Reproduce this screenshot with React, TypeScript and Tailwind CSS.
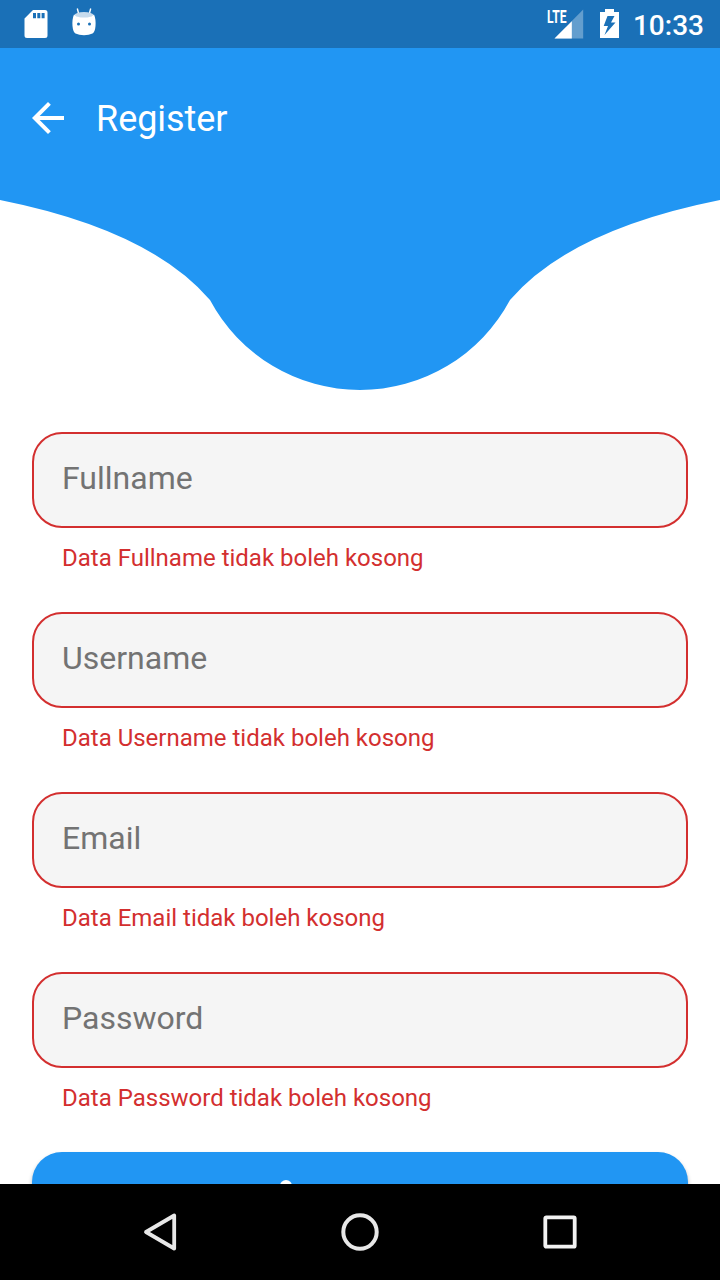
const fields = ["Fullname", "Username", "Email", "Password"];

function StatusBar() {
  return (
    <div className="flex h-12 shrink-0 items-center justify-between bg-[#1a70b7] text-white">
      <svg width="120" height="48" fill="white">
        <path
          fillRule="evenodd"
          d="M33 10H45Q47.5 10 47.5 12.5V35.5Q47.5 38 45 38H27Q24.5 38 24.5 35.5V18.5ZM33 13V18.3H36V13ZM37.3 13V18.3H40.3V13ZM41.6 13V18.3H44.6V13Z"
        />
        <path d="M77.3 8.500L79 15M90.700 8.500L89 15" stroke="white" strokeWidth="1.4" />
        <ellipse cx="84" cy="15" rx="9.5" ry="3" fill="#c6dbed" />
        <path
          fillRule="evenodd"
          d="M74 14.5Q76 17.5 84 17.5Q92 17.5 94 14.5Q96 19 95.5 26Q95 32 92.5 33.5Q89 35.3 84 35.3Q79 35.3 75.500 33.500Q73 32 72.500 26Q72 19 74 14.500ZM77 24A1.500 1.500 0 1 0 80 24A1.500 1.500 0 1 0 77 24ZM88 24A1.500 1.500 0 1 0 91 24A1.500 1.500 0 1 0 88 24Z"
        />
      </svg>
      <div className="flex items-center pr-4">
        <svg width="86" height="48" viewBox="540 0 86 48" fill="white">
          <text
            x="547"
            y="22.7"
            textLength="19.500"
            lengthAdjust="spacingAndGlyphs"
            className="text-[17.5px] font-bold"
          >
            LTE
          </text>
          <path d="M583.200 9.500V38.500H554.500Z" opacity=".32" />
          <path d="M571.800 21.300V38.500H554.500Z" />
          <path
            fillRule="evenodd"
            d="M605 9H614V12H619V38H600V12H605ZM607.500 16L603.700 26H608L604.500 35L615.500 22.500H611L614.500 16Z"
          />
        </svg>
        <span className="ml-[7px] mt-1 text-[28px] leading-8 font-medium">10:33</span>
      </div>
    </div>
  );
}

function Header() {
  return (
    <header className="grid h-[342px] shrink-0">
      <svg className="col-start-1 row-start-1" width="720" height="342" viewBox="0 48 720 342">
        <path
          d="M0 48H720V200Q570 230 510 300A170 170 0 0 1 210 300Q150 230 0 200Z"
          fill="#2196f3"
        />
      </svg>
      <div className="z-10 col-start-1 row-start-1 flex h-[140px] items-center gap-8 pl-8 text-white">
        <svg width="32" height="32" viewBox="4 4 16 16" fill="white">
          <path d="M20 11H7.830l5.590-5.590L12 4l-8 8 8 8 1.410-1.410L7.830 13H20v-2z" />
        </svg>
        <h1 className="pt-0.5 text-[36px] leading-[42px] tracking-[-0.05px]">Register</h1>
      </div>
    </header>
  );
}

function Field({ label }: { label: string }) {
  return (
    <div className="flex h-[180px] shrink-0 flex-col">
      <input
        type="text"
        placeholder={label}
        aria-label={label}
        className="h-24 w-full rounded-[30px] border-2 border-[#d32f2f] bg-[#f5f5f5] px-7 pb-1 text-[32px] outline-none placeholder:text-[#737373]"
      />
      <p className="mt-4 pl-[30px] text-2xl leading-7 text-[#d32f2f]">Data {label} tidak boleh kosong</p>
    </div>
  );
}

function NavigationBar() {
  return (
    <nav className="flex h-24 shrink-0 items-center justify-center gap-40 bg-black">
      <svg width="40" height="40" fill="none" stroke="#e8e8e8" strokeWidth="3.800" strokeLinejoin="round">
        <path d="M34.200 3.500V36.500L6 20Z" />
      </svg>
      <svg width="40" height="40" fill="none" stroke="#e8e8e8" strokeWidth="4">
        <circle cx="20" cy="20" r="16.700" />
      </svg>
      <svg width="40" height="40" fill="none" stroke="#f2f2f2" strokeWidth="3.800" strokeLinejoin="round">
        <rect x="5.300" y="5.300" width="29.400" height="29.400" rx="1" />
      </svg>
    </nav>
  );
}

export default function App() {
  return (
    <div className="flex h-[1280px] w-[720px] flex-col overflow-hidden bg-white font-['Roboto',sans-serif]">
      <StatusBar />
      <main className="flex min-h-0 flex-1 flex-col overflow-hidden">
        <Header />
        <form className="flex flex-col px-8 pt-[42px]">
          {fields.map((label) => (
            <Field key={label} label={label} />
          ))}
          <button
            type="button"
            aria-label="Register"
            className="flex h-24 shrink-0 justify-start rounded-[30px] bg-[#2196f3] pt-7 pl-[248px] shadow-[0_3px_4px_rgba(0,0,0,0.3)]"
          >
            <span className="size-3 rounded-full bg-white" />
          </button>
        </form>
      </main>
      <NavigationBar />
    </div>
  );
}
